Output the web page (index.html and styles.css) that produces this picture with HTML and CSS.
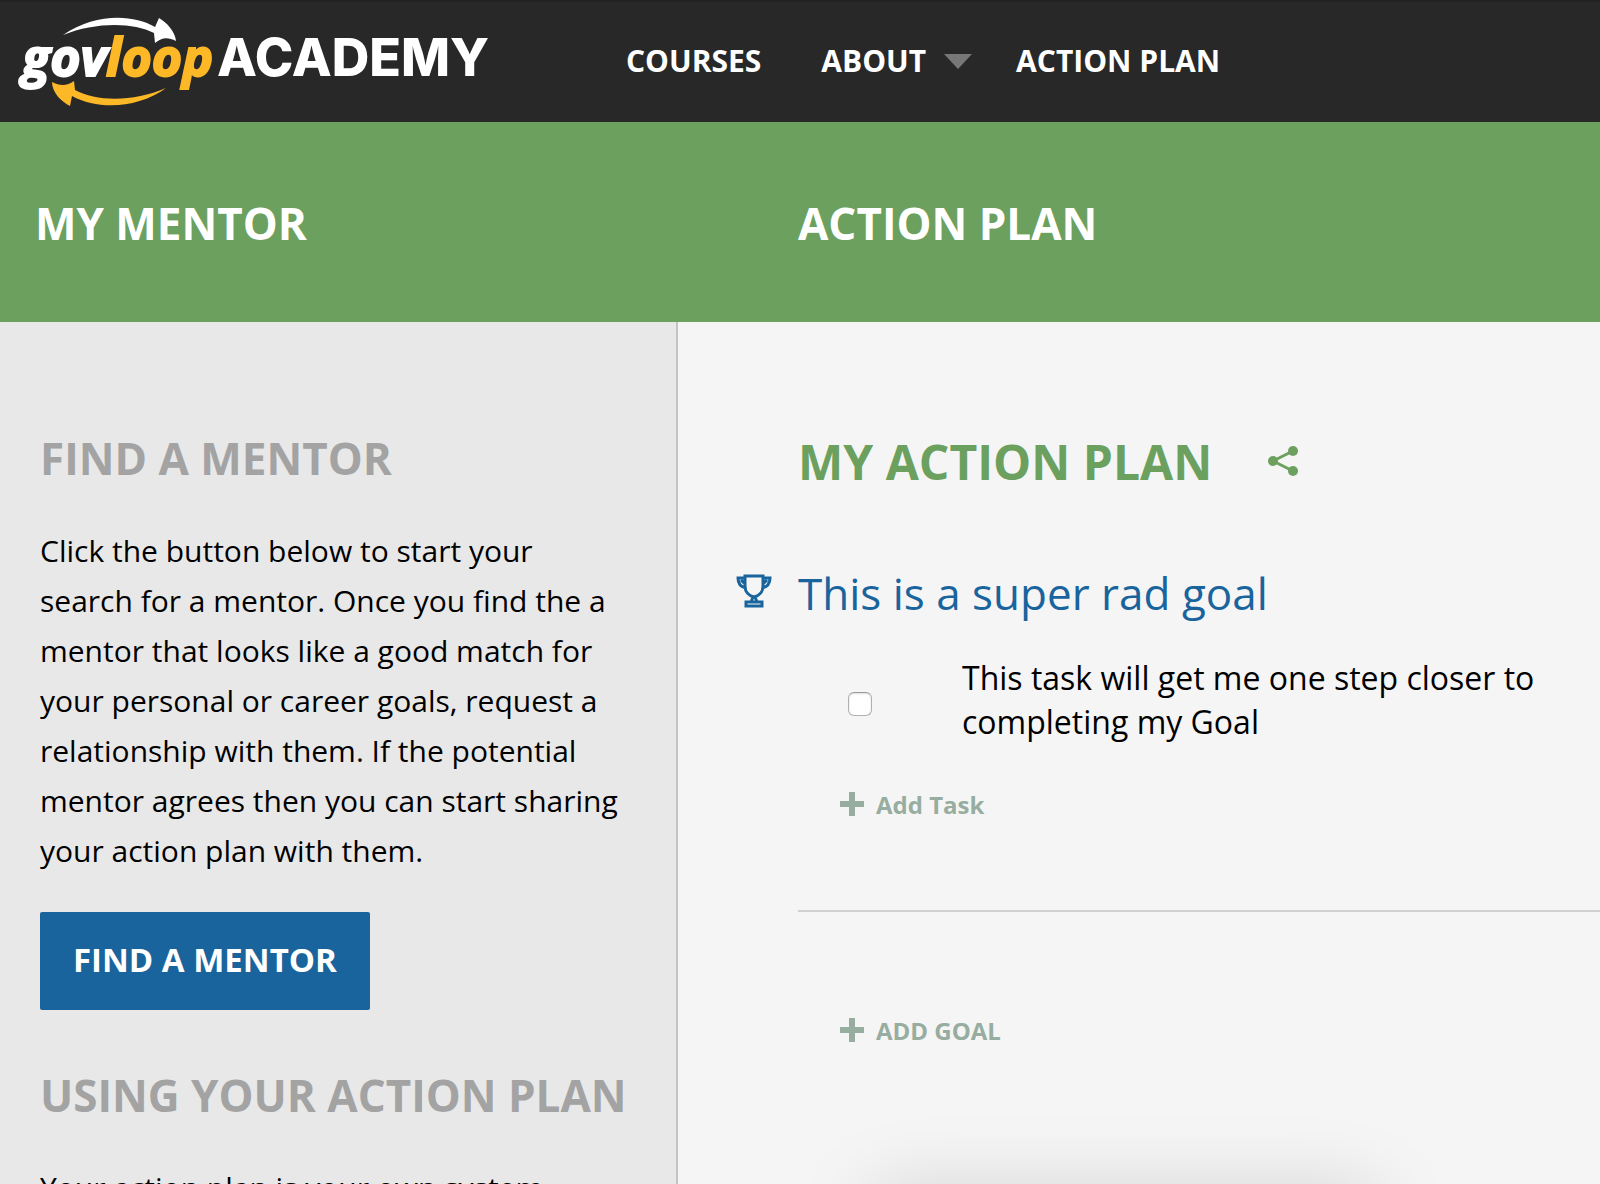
FILE: index.html
```
<!DOCTYPE html>
<html lang="en">
<head>
  <meta charset="utf-8">
  <meta name="viewport" content="width=device-width, initial-scale=1">
  <title>Action Plan - GovLoop Academy</title>
  <link rel="stylesheet" href="styles.css">
</head>
<body>
  <header class="topbar">
    <a class="logo" href="#" aria-label="GovLoop Academy">
      <svg class="logo-art" viewBox="0 0 510 122" aria-hidden="true">
        <path class="logo-white" d="M63 35C95 13 133 14 155 27L159 18C167 23 175 31 176 41C168 37 162 37 155 43L154 33C133 22 95 22 63 35Z"/>
        <path class="logo-gold" d="M166 88C137 109 98 110 72 96L70 106C62 102 52 93 52 82C60 86 67 86 74 81L75 90C97 102 134 102 166 88Z"/>
        <text class="logo-word logo-white" x="22" y="76">gov</text>
        <text class="logo-word logo-gold" x="106" y="76">loop</text>
        <text class="logo-academy logo-white" x="217" y="76">ACADEMY</text>
      </svg>
    </a>
    <nav class="nav">
      <a href="#">COURSES</a>
      <a class="nav-menu" href="#">ABOUT <span class="caret"></span></a>
      <a href="#">ACTION PLAN</a>
    </nav>
  </header>

  <div class="banner">
    <h2 class="banner-side">MY MENTOR</h2>
    <h1 class="banner-main">ACTION PLAN</h1>
  </div>

  <div class="content">
    <aside class="sidebar">
      <h3 class="side-title">FIND A MENTOR</h3>
      <p class="side-text">Click the button below to start your search for a mentor. Once you find the a mentor that looks like a good match for your personal or career goals, request a relationship with them. If the potential mentor agrees then you can start sharing your action plan with them.</p>
      <button class="find-button" type="button">FIND A MENTOR</button>
      <h3 class="side-title">USING YOUR ACTION PLAN</h3>
      <p class="side-text">Your action plan is your own system</p>
    </aside>

    <main class="plan">
      <div class="plan-head">
        <h2 class="plan-title">MY ACTION PLAN</h2>
        <a class="share" href="#" aria-label="Share">
          <svg viewBox="0 0 32 32" width="32" height="32" aria-hidden="true">
            <path d="M5 15L25 5M5 15L25 25" fill="none" stroke="currentColor" stroke-width="3"/>
            <circle cx="5" cy="15" r="5"/><circle cx="25" cy="5" r="5"/><circle cx="25" cy="25" r="5"/>
          </svg>
        </a>
      </div>

      <section class="goal">
        <div class="goal-head">
          <svg class="trophy" viewBox="0 0 36 38" width="36" height="38" aria-hidden="true">
            <path d="M9 2H27V12C27 18 23 22 18 23C13 22 9 18 9 12ZM9 4H2C2 10 5 13 10 14M27 4H34C34 10 31 13 26 14M5 6L9 10M31 6L27 10M17 23L15 28M19 23L21 28M10 28H26V32H10Z"/>
          </svg>
          <h3 class="goal-title">This is a super rad goal</h3>
        </div>
        <div class="task">
          <input class="task-check" type="checkbox" id="task-1">
          <label class="task-label" for="task-1">This task will get me one step closer to completing my Goal</label>
        </div>
        <button class="add" type="button"><span class="plus"></span>Add Task</button>
      </section>

      <button class="add add-goal" type="button"><span class="plus"></span>ADD GOAL</button>
      <div class="panel"></div>
    </main>
  </div>
</body>
</html>
```
FILE: styles.css
```
* {
  box-sizing: border-box;
}

html {
  height: 100%;
  overflow: hidden;
}

body {
  margin: 0;
  height: 100%;
  display: flex;
  flex-direction: column;
  overflow: hidden;
  background: #f5f5f5;
  color: #000;
  font: 30px/50px "Open Sans", "Noto Sans", sans-serif;
}

h1, h2, h3, p {
  margin: 0;
}

a {
  color: inherit;
  text-decoration: none;
}

button {
  font: inherit;
  border: 0;
  cursor: pointer;
}

/* Top bar */
.topbar {
  flex: none;
  display: flex;
  align-items: center;
  height: 122px;
  background: #282828;
  box-shadow: inset 0 2px #222;
}

.logo {
  flex: none;
  width: 510px;
}

.logo-art {
  display: block;
  width: 100%;
}

.logo-white {
  fill: #fff;
  stroke: #fff;
}

.logo-gold {
  fill: #fdb827;
  stroke: #fdb827;
}

.logo-art path {
  stroke: none;
}

.logo-word {
  font: italic 700 52px "Open Sans", sans-serif;
  stroke-width: 2px;
}

.logo-academy {
  font: 800 52px "Inter", sans-serif;
  stroke: none;
}

.nav {
  display: flex;
  gap: 60px;
  margin-left: 116px;
  color: #fff;
  font-weight: 700;
}

.nav-menu {
  display: flex;
  align-items: center;
  gap: 18px;
  margin-right: -16px;
}

.caret {
  border: 14px solid transparent;
  border-top: 15px solid #777;
  border-bottom: 0;
}

/* Title band */
.banner {
  flex: none;
  display: flex;
  align-items: center;
  height: 200px;
  padding-top: 2px;
  background: #6ba05e;
  color: #fff;
}

.banner-side,
.banner-main,
.side-title {
  font-size: 44px;
  line-height: 60px;
  font-weight: 700;
}

.banner-side {
  flex: 0 0 798px;
  padding-left: 35px;
}

/* Columns */
.content {
  flex: 1;
  min-height: 0;
  display: flex;
}

.sidebar {
  flex: 0 0 678px;
  padding: 106px 48px 0 40px;
  overflow: hidden;
  background: #e8e8e8;
  border-right: 2px solid #c3c3c3;
}

.side-title {
  color: #a3a3a3;
}

.side-text {
  margin-top: 38px;
}

.find-button {
  display: block;
  margin: 36px 0 55px;
  padding: 23px 33px 25px;
  border-radius: 2px;
  background: #1a649d;
  color: #fff;
  font-size: 33px;
  font-weight: 700;
}

.plan {
  flex: 1;
  min-width: 0;
  overflow: hidden;
  padding: 110px 0 0 120px;
}

.plan-head {
  display: flex;
  align-items: center;
  gap: 56px;
}

.plan-title {
  color: #6ba05e;
  font-size: 48px;
  line-height: 60px;
  font-weight: 700;
}

.share {
  color: #6ba05e;
  fill: currentColor;
  line-height: 0;
}

.goal {
  padding-bottom: 89px;
  border-bottom: 2px solid #d0d0d0;
}

.goal-head {
  display: flex;
  align-items: center;
  gap: 26px;
  margin: 71px 0 0 -62px;
  color: #1a649d;
}

.trophy {
  flex: none;
  fill: none;
  stroke: currentColor;
  stroke-width: 3;
}

.goal-title {
  font-size: 44px;
  line-height: 60px;
  font-weight: 400;
}

.task {
  display: flex;
  align-items: center;
  gap: 90px;
  margin: 33px 56px 0 50px;
}

.task-check {
  appearance: none;
  flex: none;
  width: 24px;
  height: 24px;
  margin: 8px 0 0;
  border: 1px solid #b0b0b0;
  border-top-color: #999;
  border-radius: 6px;
  background: #fff;
  box-shadow: inset 0 1px 2px #ddd;
}

.task-label {
  font-size: 32px;
  line-height: 44px;
}

.add {
  display: flex;
  align-items: center;
  gap: 12px;
  margin: 45px 0 0 42px;
  padding: 0;
  background: none;
  color: #97ada0;
  font-size: 24px;
  line-height: 32px;
  font-weight: 700;
}

.plus {
  width: 24px;
  height: 24px;
  margin-bottom: 2px;
  background:
    linear-gradient(currentColor, currentColor) center / 6px 24px no-repeat,
    linear-gradient(currentColor, currentColor) center / 24px 6px no-repeat;
}

.add-goal {
  margin-top: 103px;
}

.panel {
  width: 500px;
  height: 200px;
  margin: 145px 0 0 76px;
  background: #f5f5f5;
  box-shadow: 0 0 80px rgba(0, 0, 0, 0.15);
}
```
